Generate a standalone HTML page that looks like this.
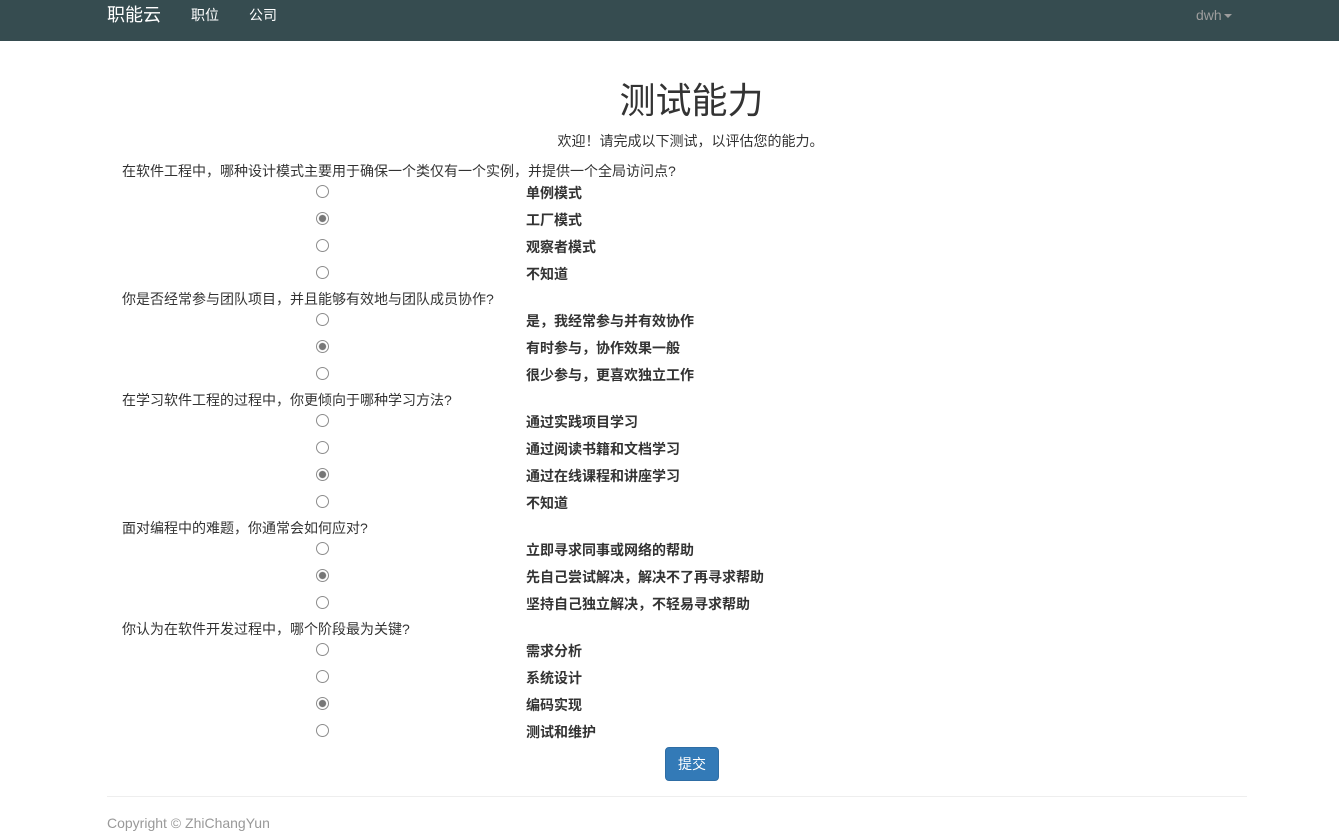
<!DOCTYPE html>
<html lang="zh">
<head>
<meta charset="utf-8">
<title>测试能力</title>
<style>
html,body{margin:0;padding:0;width:1339px;height:839px;overflow:hidden;background:#fff}
body{font-family:"Liberation Sans","Noto Sans CJK SC",sans-serif;font-size:14px;line-height:20px;color:#333;position:relative}
.a{position:absolute;white-space:nowrap}
.nav{position:absolute;left:0;top:0;width:1339px;height:41px;background:#364c50}
.q{position:absolute;left:122px;white-space:nowrap}
.o{position:absolute;left:526px;white-space:nowrap;font-weight:bold}
input{position:absolute;left:315.5px;margin:0;width:13px;height:13px;-webkit-appearance:none;appearance:none;box-sizing:border-box;border:1px solid #8c8c8c;border-radius:50%;background:#fff;outline:none}
input:checked{background:radial-gradient(circle at center,#777 0,#777 3.2px,#fff 4px)}
</style>
</head>
<body>
<div class="nav"></div>
<div class="a" style="left:107px;top:5px;font-size:18px;color:#fff">职能云</div>
<div class="a" style="left:191px;top:5px;color:#fff">职位</div>
<div class="a" style="left:249px;top:5px;color:#fff">公司</div>
<div class="a" style="left:1196px;top:5px;color:#9d9d9d">dwh</div>
<div class="a" style="left:1224px;top:14px;width:0;height:0;border-top:4px solid #9d9d9d;border-left:4px solid transparent;border-right:4px solid transparent"></div>

<div class="a" style="left:0;width:1383px;text-align:center;top:81px;font-size:36px;line-height:40px">测试能力</div>
<div class="a" style="left:1px;width:1379px;text-align:center;top:131px">欢迎！请完成以下测试，以评估您的能力。</div>

<div class="q" style="top:161px">在软件工程中，哪种设计模式主要用于确保一个类仅有一个实例，并提供一个全局访问点?</div>
<input type="radio" name="a1" style="top:185px"><div class="o" style="top:183px">单例模式</div>
<input type="radio" name="a1" checked style="top:212px"><div class="o" style="top:210px">工厂模式</div>
<input type="radio" name="a1" style="top:239px"><div class="o" style="top:237px">观察者模式</div>
<input type="radio" name="a1" style="top:266px"><div class="o" style="top:264px">不知道</div>

<div class="q" style="top:289px">你是否经常参与团队项目，并且能够有效地与团队成员协作?</div>
<input type="radio" name="a2" style="top:313px"><div class="o" style="top:311px">是，我经常参与并有效协作</div>
<input type="radio" name="a2" checked style="top:340px"><div class="o" style="top:338px">有时参与，协作效果一般</div>
<input type="radio" name="a2" style="top:367px"><div class="o" style="top:365px">很少参与，更喜欢独立工作</div>

<div class="q" style="top:390px">在学习软件工程的过程中，你更倾向于哪种学习方法?</div>
<input type="radio" name="a3" style="top:414px"><div class="o" style="top:412px">通过实践项目学习</div>
<input type="radio" name="a3" style="top:441px"><div class="o" style="top:439px">通过阅读书籍和文档学习</div>
<input type="radio" name="a3" checked style="top:468px"><div class="o" style="top:466px">通过在线课程和讲座学习</div>
<input type="radio" name="a3" style="top:495px"><div class="o" style="top:493px">不知道</div>

<div class="q" style="top:518px">面对编程中的难题，你通常会如何应对?</div>
<input type="radio" name="a4" style="top:542px"><div class="o" style="top:540px">立即寻求同事或网络的帮助</div>
<input type="radio" name="a4" checked style="top:569px"><div class="o" style="top:567px">先自己尝试解决，解决不了再寻求帮助</div>
<input type="radio" name="a4" style="top:596px"><div class="o" style="top:594px">坚持自己独立解决，不轻易寻求帮助</div>

<div class="q" style="top:619px">你认为在软件开发过程中，哪个阶段最为关键?</div>
<input type="radio" name="a5" style="top:643px"><div class="o" style="top:641px">需求分析</div>
<input type="radio" name="a5" style="top:670px"><div class="o" style="top:668px">系统设计</div>
<input type="radio" name="a5" checked style="top:697px"><div class="o" style="top:695px">编码实现</div>
<input type="radio" name="a5" style="top:724px"><div class="o" style="top:722px">测试和维护</div>

<div class="a" style="left:665px;top:747px;width:52px;height:32px;line-height:32px;text-align:center;background:#337ab7;border:1px solid #2e6da4;border-radius:4px;color:#fff">提交</div>
<div class="a" style="left:107px;top:796px;width:1140px;height:1px;background:#eee"></div>
<div class="a" style="left:107px;top:813px;color:#999">Copyright © ZhiChangYun</div>
</body>
</html>
